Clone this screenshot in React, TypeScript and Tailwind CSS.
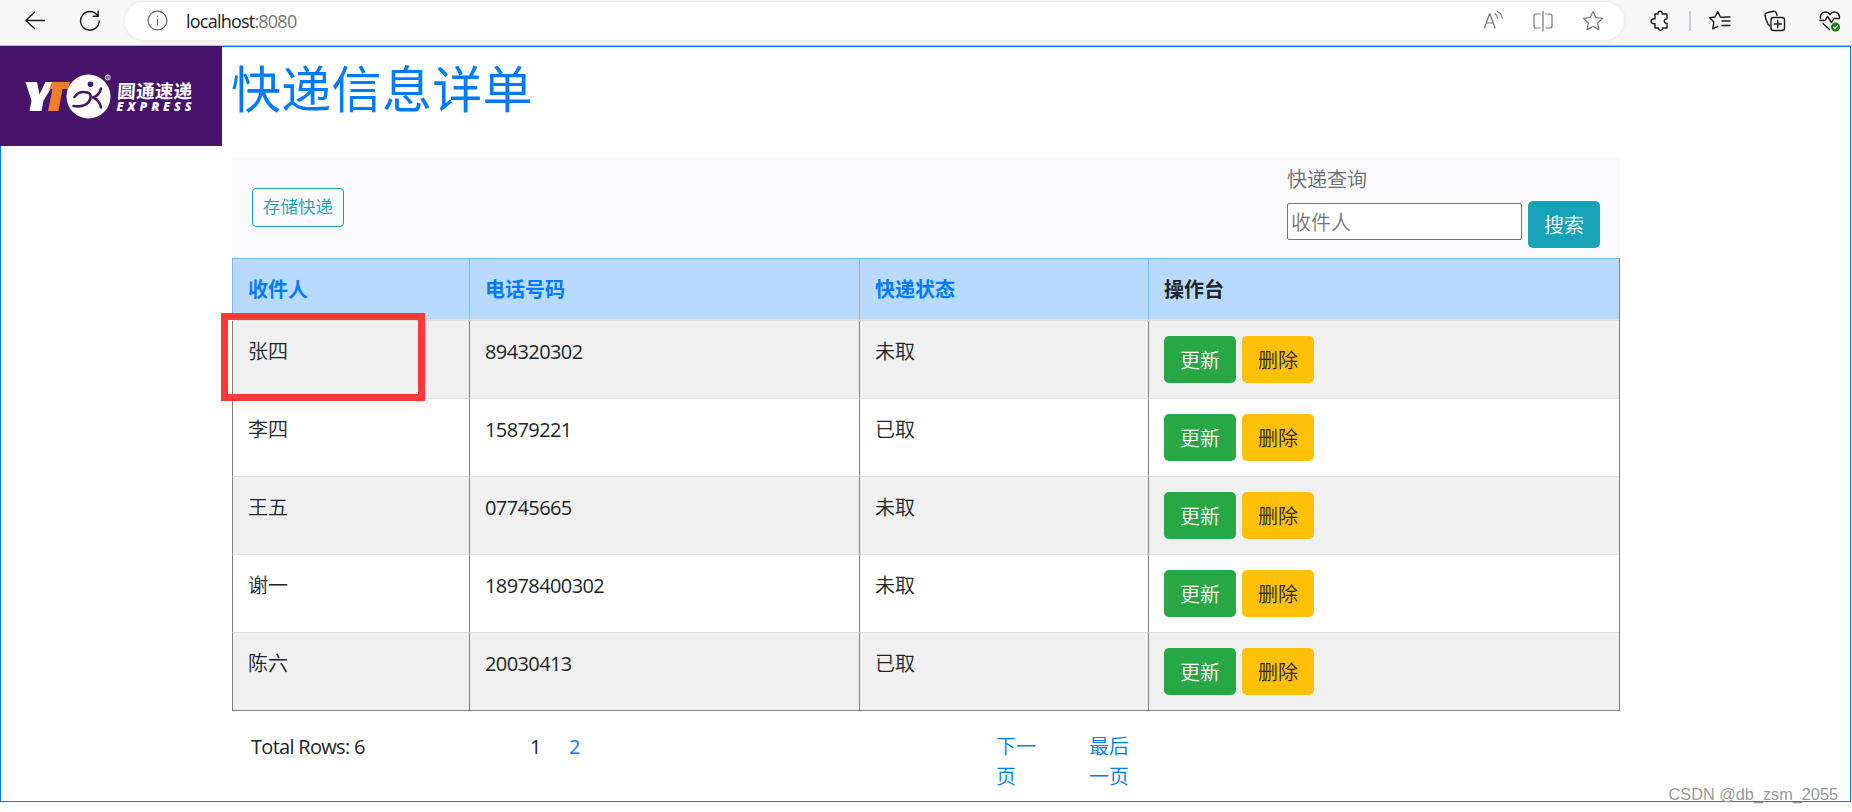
import { clsx } from 'clsx';

interface Parcel {
  name: string;
  phone: string;
  status: string;
}

const parcels: Parcel[] = [
  { name: '张四', phone: '894320302', status: '未取' },
  { name: '李四', phone: '15879221', status: '已取' },
  { name: '王五', phone: '07745665', status: '未取' },
  { name: '谢一', phone: '18978400302', status: '未取' },
  { name: '陈六', phone: '20030413', status: '已取' },
];

const columns = ['收件人', '电话号码', '快递状态', '操作台'];

const iconProps = {
  width: 22,
  height: 22,
  viewBox: '0 0 22 22',
  fill: 'none',
  stroke: 'currentColor',
  strokeWidth: 1.4,
  strokeLinecap: 'round' as const,
  strokeLinejoin: 'round' as const,
};

const starPath =
  'M11 1.5l2.9 6 6.6.9-4.8 4.6 1.2 6.6L11 16.5l-5.9 3.1 1.2-6.6L1.5 8.4l6.6-.9z';

function BrowserBar() {
  return (
    <div className="flex h-[46px] border-b border-[#b9b9b9] bg-[#f7f7f7] pl-[24px] text-[#1b1b1b]">
      <svg {...iconProps} className="mt-[9px] shrink-0">
        <path d="M20.5 11.5H1.8M10.5 3.3L1.8 11.5l8.7 8" />
      </svg>
      <svg {...iconProps} className="mt-[10px] ml-[33px] shrink-0">
        <path d="M18.3 5.2A9.3 9.3 0 1 0 20.2 11M19.2 1.2v5h-5" />
      </svg>

      {/* Address field */}
      <div className="mt-[2px] ml-[24px] flex h-[38px] w-[1499px] shrink-0 items-center rounded-full bg-white pl-[22px] shadow-[0_0_4px_rgba(0,0,0,0.08)]">
        <svg {...iconProps} strokeWidth={1.2} className="shrink-0 text-[#666]">
          <circle cx="10.5" cy="10.5" r="9.4" />
          <path d="M10.5 9.5V15M10.5 6v.4" />
        </svg>
        <span className="ml-[17px] pb-px font-['Open_Sans'] text-[18px] tracking-[-0.78px] text-[#1b1b1b]">
          localhost<span className="text-[#767676]">:8080</span>
        </span>
        <div className="mr-[20px] ml-auto flex gap-[28px] text-[#767676]">
          <svg {...iconProps} strokeWidth={1.2}>
            <path d="M2.5 18L7.7 3.5 13 18M4.4 13h6.7M13 3.7c1.6 1 2.500 2.500 2.600 4.500M15.500 1.500c3 1.600 4.600 4 4.800 7" />
          </svg>
          <svg {...iconProps} strokeWidth={1.2}>
            <path d="M11 1v20M8 4H4a2 2 0 0 0-2 2v10a2 2 0 0 0 2 2h4M14 4h4a2 2 0 0 1 2 2v10a2 2 0 0 1-2 2h-4" />
          </svg>
          <svg {...iconProps} strokeWidth={1.2}>
            <path d={starPath} />
          </svg>
        </div>
      </div>

      {/* Toolbar buttons */}
      <svg {...iconProps} className="mt-[10px] ml-[25px] shrink-0">
        <path d="M6 4h3c-.6-3.6 4.8-3.6 4.2 0H18v5c-3.6-.6-3.6 4.8 0 4.2V18h-4.5c.6 3.2-4.5 3.2-4 0H6v-4.300c-5.200 1-5.200-5.800 0-4.800z" />
      </svg>
      <div className="mt-[11px] ml-[18px] h-5 w-[2px] shrink-0 bg-[#d3c9db]" />
      <svg {...iconProps} className="mt-[10px] ml-[18px] shrink-0">
        <path d="M15.5 7.5L11.3 7 8.7 1.5 6 7l-5.2.8 4 4.2-1 6.8 5-2.5M13 11h8M13 15.5h8M16 7h5" />
      </svg>
      <svg {...iconProps} className="mt-[10px] ml-[33px] shrink-0">
        <path d="M5.5 15.8C3 13.5 1.8 9 1 5.5.8 4 1.5 3 3 2.7l6.500-1.500c1.500-.3 2.500.5 3 2.300l.5 1.700" />
        <rect x="7" y="7.5" width="13.5" height="13" rx="2.5" />
        <path d="M13.8 10.5v7M10.3 14h7" />
      </svg>
      <svg {...iconProps} className="mt-[10px] ml-[33px] shrink-0">
        <path d="M1.5 8.5C.5 2 8 .2 11 4.5 14 .2 21.5 2 20.3 8.5M1 10.5h5l2.500-4 4 6 2.500-4h5M4 13.500l6.500 6" />
        <circle cx="16.5" cy="17" r="4.5" fill="#107c10" stroke="none" />
        <path d="M14.5 17.2l1.4 1.3 2.6-2.8" stroke="#fff" strokeWidth="1.2" />
      </svg>
    </div>
  );
}

function Logo() {
  return (
    <svg width="222" height="100" viewBox="0 0 222 100" className="shrink-0 bg-[#47146b]">
      <path d="M25.5 36H37l2.5 12.5 6-12.5H55L43.5 54.5 41.5 65h-12l2-10.500z" fill="#fff" />
      <path d="M52 36h18l-2 7h-5.5l-4 22H48l4.500-22H49z" fill="#f07d2e" />
      <circle cx="88.5" cy="50.5" r="22" fill="#fff" />
      <circle cx="90.5" cy="38.300" r="2.800" fill="#47146b" />
      <g fill="none" stroke="#47146b" strokeLinecap="round" strokeLinejoin="round">
        <path d="M74.5 51c3-4.500 8.500-5.500 13-4.500 4 1 4 5.500 1.500 9-3 4-9 5.500-15.500 4.500" strokeWidth="2.600" />
        <path d="M101 42.500c-1 4.500-3.500 7.500-8 9 4 1.500 7 4.500 8 10" strokeWidth="2.600" />
      </g>
      <circle cx="107.8" cy="31.5" r="2.5" fill="none" stroke="#fff" strokeWidth=".9" />
      <path d="M107 33v-3h1.200v1.500l.8 1.500" fill="none" stroke="#fff" strokeWidth=".6" />
      <g fill="#fff">
        <text x="117" y="52.500" fontSize="18.500" fontWeight="700" textLength="75" transform="skewX(-4) translate(3.500 0)" fontFamily="'Noto Sans CJK SC', sans-serif">
          圆通速递
        </text>
        <text x="116.500" y="65" fontSize="12.500" fontWeight="800" textLength="75" fontStyle="italic" fontFamily="'Open Sans', sans-serif">
          EXPRESS
        </text>
      </g>
    </svg>
  );
}

function FilterBar() {
  return (
    <div className="flex h-[101px] items-start justify-between bg-[#f9f9fc] px-5 font-[350]">
      <button className="mt-[31px] h-[39px] w-[92px] rounded-[4px] border border-[#17a2b8] pb-[2px] text-[17.5px] leading-[33px] text-[#17a2b8]">
        存储快递
      </button>
      <div className="pt-[8px]">
        <label className="block h-[30px] leading-[30px] text-[#6c6c74]">快递查询</label>
        <div className="flex gap-[6px] pt-[6px]">
          <input
            type="text"
            placeholder="收件人"
            className="mt-[2px] h-[37px] w-[235px] rounded-[2px] border border-[#767676] bg-white px-[3px] pt-[2px] placeholder:text-[#757575]"
          />
          <button className="h-[47px] w-[72px] rounded-[5px] bg-[#17a2b8] pt-[3px] text-white">搜索</button>
        </div>
      </div>
    </div>
  );
}

function ParcelTable() {
  return (
    <table className="w-full table-fixed border-separate border-spacing-0 border-r border-[#808080] text-left">
      <colgroup>
        <col className="w-[237px]" />
        <col className="w-[390px]" />
        <col className="w-[289px]" />
        <col />
      </colgroup>
      <thead>
        <tr className="h-[63px] bg-[#b8daff]">
          {columns.map((title, i) => (
            <th
              key={title}
              className={clsx(
                'border-t border-b-2 border-l border-t-[#7abaff] border-b-[#dee2e6] border-l-[#7abaff] px-[15px] pt-[2px] font-bold',
                i === 3 ? 'text-[#212529]' : 'text-[#007bff]',
              )}
            >
              {title}
            </th>
          ))}
        </tr>
      </thead>
      <tbody className="font-[350]">
        {parcels.map((p, i) => {
          const cell = clsx(
            'border-b border-l border-l-[#808080] px-[15px] align-top',
            i === parcels.length - 1 ? 'border-b-[#808080]' : 'border-b-[#dee2e6]',
          );
          return (
            <tr key={p.name} className={clsx('h-[78px]', i % 2 === 0 ? 'bg-[#f0f0f0]' : 'bg-white')}>
              <td className={clsx(cell, 'pt-[16px]')}>{p.name}</td>
              <td className={clsx(cell, 'pt-[16px] font-normal tracking-[-0.6px]')}>{p.phone}</td>
              <td className={clsx(cell, 'pt-[16px]')}>{p.status}</td>
              <td className={clsx(cell, 'pt-[15px]')}>
                <div className="flex gap-[6px]">
                  <button className="h-[47px] w-[72px] rounded-[5px] bg-[#28a745] pt-[3px] text-white">更新</button>
                  <button className="h-[47px] w-[72px] rounded-[5px] bg-[#ffc107] pt-[3px] text-[#212529]">删除</button>
                </div>
              </td>
            </tr>
          );
        })}
      </tbody>
    </table>
  );
}

function Pagination() {
  return (
    <div className="flex pt-[21px] pl-[19px] leading-[30px]">
      <span className="w-[279px] tracking-[-0.7px]">Total Rows: 6</span>
      <span className="w-[39px]">1</span>
      <a className="w-[427px] text-[#007bff]">2</a>
      <a className="w-[93px] font-[350] text-[#007bff]">下一<br />页</a>
      <a className="font-[350] text-[#007bff]">最后<br />一页</a>
    </div>
  );
}

export default function App() {
  return (
    <div className="relative h-[812px] w-[1852px] overflow-hidden bg-white font-['Open_Sans','Noto_Sans_CJK_SC',sans-serif] text-[20px] leading-[30px] text-[#212529]">
      <BrowserBar />

      <main className="h-[756px] w-[1851px] border border-[#007bff]">
        <header className="-mt-px -ml-px flex h-[111px] items-start">
          <Logo />
          <h1 className="mt-[13px] ml-[9px] text-[50px] leading-[60px] tracking-[0.3px] text-[#007bff]">快递信息详单</h1>
        </header>
        <div className="ml-[231px] w-[1388px]">
          <FilterBar />
          <ParcelTable />
          <Pagination />
        </div>
      </main>

      {/* Marker around the first recipient */}
      <div className="absolute top-[313px] left-[221px] h-[88px] w-[204px] border-[7px] border-[#fd3838]" />

      <span className="absolute top-[780px] right-[14px] font-['Liberation_Sans'] text-[16.3px] leading-[28px] text-[#999]">
        CSDN @db_zsm_2055
      </span>
    </div>
  );
}
